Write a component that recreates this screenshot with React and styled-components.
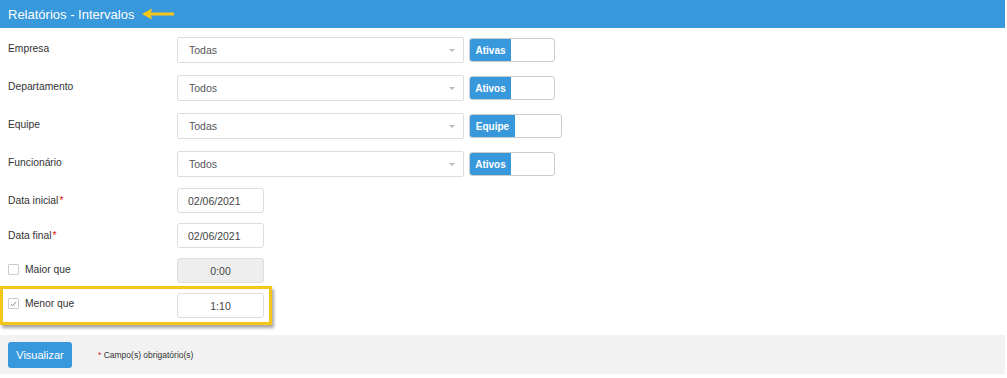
import React from 'react'
import styled, { createGlobalStyle } from 'styled-components'

const GlobalStyle = createGlobalStyle`
    body {
        margin: 0;
        background: #fff;
        font-family: "Liberation Sans", Arial, sans-serif;
    }
`

const Page = styled.div`
    width: 1005px;
`

const Header = styled.div`
    height: 28px;
    background: #3898dc;
    display: flex;
    align-items: center;
    padding-left: 8px;
    gap: 7px;
    color: #fff;
    font-size: 13px;
`

const Form = styled.div`
    padding-top: 9px;
    display: flex;
    flex-direction: column;
`

const Row = styled.div`
    display: flex;
    align-items: center;
    height: ${(p) => p.h}px;
    box-sizing: border-box;
    padding-left: 8px;
    ${(p) =>
        p.highlight &&
        `
        width: 272px;
        border: 3px solid #f5c518;
        padding-left: 5px;
        box-shadow: 2px 3px 3px rgba(0,0,0,0.35);
    `}
`

const Label = styled.div`
    width: 169px;
    font-size: 10.3px;
    color: #333;
    display: flex;
    align-items: center;
    gap: 6px;
    align-self: flex-start;
    padding-top: ${(p) => p.top || 7}px;
`

const Req = styled.span`
    color: #e02020;
    margin-left: 1px;
`

const Select = styled.div`
    width: 287px;
    height: 26px;
    box-sizing: border-box;
    border: 1px solid #ddd;
    border-radius: 2px;
    display: flex;
    align-items: center;
    justify-content: space-between;
    padding: 0 8px 0 11px;
    font-size: 10.5px;
    color: #555;
    align-self: flex-start;
`

const Caret = styled.span`
    width: 0;
    height: 0;
    border-left: 3px solid transparent;
    border-right: 3px solid transparent;
    border-top: 3px solid #bbb;
`

const Toggle = styled.div`
    margin-left: 5px;
    width: ${(p) => p.w}px;
    height: 24px;
    box-sizing: border-box;
    border: 1px solid #ccc;
    border-radius: 3px;
    display: flex;
    align-self: flex-start;
    margin-top: 1px;
    overflow: hidden;
`

const ToggleOn = styled.div`
    width: ${(p) => p.w}px;
    background: #3898dc;
    color: #fff;
    font-size: 10px;
    font-weight: bold;
    display: flex;
    align-items: center;
    justify-content: center;
`

const Input = styled.div`
    width: 87px;
    height: 25px;
    box-sizing: border-box;
    border: 1px solid #ddd;
    border-radius: 3px;
    background: ${(p) => (p.disabled ? '#eee' : '#fff')};
    display: flex;
    align-items: center;
    justify-content: ${(p) => (p.center ? 'center' : 'flex-start')};
    padding-left: ${(p) => (p.center ? 0 : 10)}px;
    font-size: 10.5px;
    color: #444;
    align-self: flex-start;
    margin-top: ${(p) => p.top || 0}px;
`

const Check = styled.span`
    width: 11px;
    height: 11px;
    box-sizing: border-box;
    border: 1px solid #ccc;
    border-radius: 1px;
    display: inline-flex;
    align-items: center;
    justify-content: center;
`

const Footer = styled.div`
    margin-top: 10px;
    height: 39px;
    background: #f2f2f2;
    display: flex;
    align-items: center;
    padding-left: 8px;
    gap: 25px;
`

const Button = styled.div`
    width: 64px;
    height: 26px;
    background: #3898dc;
    border-radius: 3px;
    color: #fff;
    font-size: 11px;
    display: flex;
    align-items: center;
    justify-content: center;
`

const Note = styled.div`
    font-size: 8.5px;
    color: #333;
`

const Arrow = () => (
    <svg width="34" height="14" viewBox="0 0 34 14">
        <path d="M1 7 L11 1.5 L10 5.5 L33 5.5 L33 8.5 L10 8.5 L11 12.5 Z" fill="#f5c518" />
    </svg>
)

function App() {
    const selects = [
        { label: 'Empresa', value: 'Todas', on: 'Ativas', tw: 86, ow: 41 },
        { label: 'Departamento', value: 'Todos', on: 'Ativos', tw: 86, ow: 41 },
        { label: 'Equipe', value: 'Todas', on: 'Equipe', tw: 93, ow: 45 },
        { label: 'Funcionário', value: 'Todos', on: 'Ativos', tw: 86, ow: 41 },
    ]

    return (
        <Page>
            <GlobalStyle />
            <Header>
                <span>Relatórios - Intervalos</span>
                <Arrow />
            </Header>
            <Form>
                {selects.map((s, i) => (
                    <Row key={s.label} h={i === 3 ? 37 : 38}>
                        <Label top={6}>{s.label}</Label>
                        <Select>
                            <span>{s.value}</span>
                            <Caret />
                        </Select>
                        <Toggle w={s.tw}>
                            <ToggleOn w={s.ow}>{s.on}</ToggleOn>
                        </Toggle>
                    </Row>
                ))}
                <Row h={35}>
                    <Label>
                        <span>
                            Data inicial<Req>*</Req>
                        </span>
                    </Label>
                    <Input>02/06/2021</Input>
                </Row>
                <Row h={35}>
                    <Label>
                        <span>
                            Data final<Req>*</Req>
                        </span>
                    </Label>
                    <Input>02/06/2021</Input>
                </Row>
                <Row h={28}>
                    <Label top={6}>
                        <Check />
                        Maior que
                    </Label>
                    <Input disabled center>
                        0:00
                    </Input>
                </Row>
                <Row h={39} highlight>
                    <Label top={9}>
                        <Check>
                            <svg width="7" height="6" viewBox="0 0 7 6">
                                <path d="M0.8 3 L2.7 4.8 L6.2 0.8" stroke="#888" strokeWidth="1" fill="none" />
                            </svg>
                        </Check>
                        Menor que
                    </Label>
                    <Input center top={4}>
                        1:10
                    </Input>
                </Row>
            </Form>
            <Footer>
                <Button>Visualizar</Button>
                <Note>
                    <Req>*</Req> Campo(s) obrigatório(s)
                </Note>
            </Footer>
        </Page>
    )
}

export default App
